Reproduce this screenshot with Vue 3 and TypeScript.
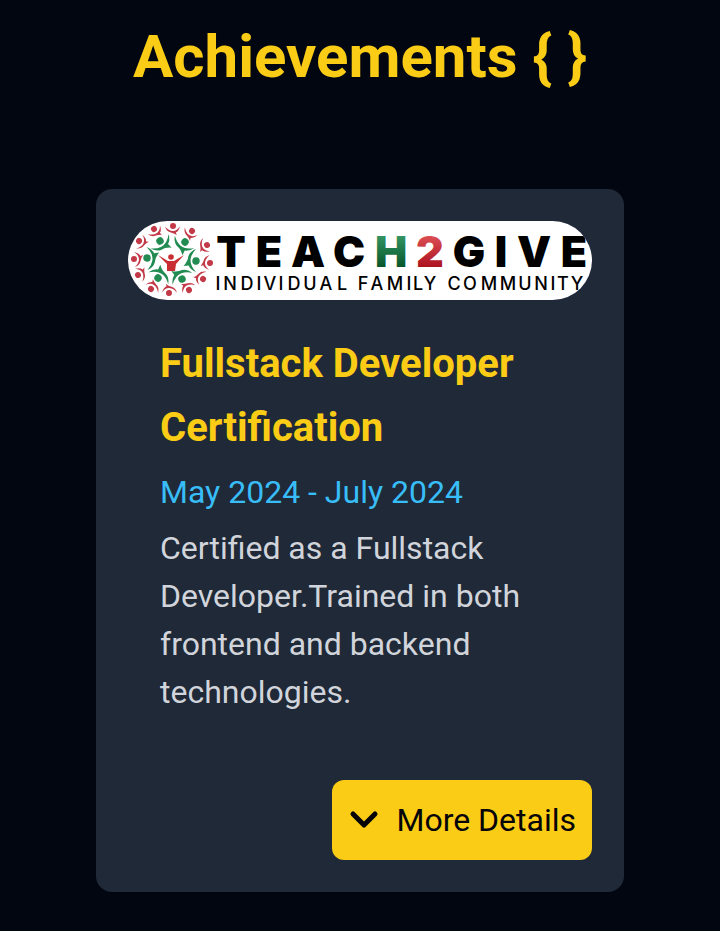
<script setup lang="ts">
import { ref } from 'vue'

interface Figure {
  x: number
  y: number
  angle: number
}

const achievement = {
  title: 'Fullstack Developer Certification',
  period: 'May 2024 - July 2024',
  summary:
    'Certified as a Fullstack Developer.Trained in both frontend and backend technologies.',
}

const open = ref(false)

// Turns head positions into figures that face away from the emblem centre.
function facingOut(heads: [number, number][]): Figure[] {
  return heads.map(([x, y]) => ({
    x,
    y,
    angle: (Math.atan2(x - 44, 38 - y) * 180) / Math.PI,
  }))
}

const outer = facingOut([
  [45, 5], [64, 10], [79, 24], [82, 42], [75, 58], [61, 69],
  [41, 72], [23, 68], [10, 54], [6, 38], [11, 20], [26, 8],
])
const inner = facingOut([
  [32, 20], [57, 21], [68, 40], [54, 58], [30, 57], [19, 37],
])
</script>

<template>
  <main class="page">
    <h1 class="heading">Achievements { }</h1>

    <article class="card">
      <svg class="logo" viewBox="0 0 464 79" role="img" aria-label="Teach2Give">
        <defs>
          <linearGradient id="green" x1="0" y1="0" x2="0" y2="1">
            <stop offset="0.2" stop-color="#339563" />
            <stop offset="0.8" stop-color="#07572b" />
          </linearGradient>
          <linearGradient id="red" x1="0" y1="0" x2="0" y2="1">
            <stop offset="0.2" stop-color="#dc4f55" />
            <stop offset="0.8" stop-color="#ad1420" />
          </linearGradient>
        </defs>
        <rect width="464" height="79" fill="#fff" />
        <g
          v-for="(p, i) in outer"
          :key="'o' + i"
          :transform="`translate(${p.x} ${p.y}) rotate(${p.angle})`"
          fill="#c23a48"
        >
          <circle r="3" />
          <path d="M-8 1Q-4 5 0 5Q4 5 7 0Q6 5 3 6.500L4 9Q1 7 -2 6.500Q-6 6 -8 1Z" />
        </g>
        <g
          v-for="(p, i) in inner"
          :key="'i' + i"
          :transform="`translate(${p.x} ${p.y}) rotate(${p.angle})`"
          fill="#218b52"
        >
          <circle r="3.7" />
          <path d="M-12 1Q-7 5 -2 5.500Q5 6 11 -1Q9 5 5 7L6 12Q1 8 -4 8Q-9 7 -12 1Z" />
        </g>
        <g fill="#c72d32">
          <circle cx="43" cy="36" r="2.8" />
          <path d="M30 34L40 40H46L56 34L48 43L47 50H39V43Z" />
        </g>
        <g class="wordmark">
          <text x="103 141 180 221" y="46">TEAC</text>
          <text x="263" y="46" fill="url(#green)">H</text>
          <text x="302" y="46" fill="url(#red)">2</text>
          <text x="341 373 406 446" y="46">GIVE</text>
        </g>
        <g class="tagline">
          <text x="90 102 119 131 142 153 166 182 198 214" y="69">INDIVIDUAL</text>
          <text x="235 249 267 281 290 302" y="69">FAMILY</text>
          <text x="326 342 361 380 397 413 425 435 449" y="69">COMMUNITY</text>
        </g>
      </svg>

      <div class="body">
        <h2 class="title">{{ achievement.title }}</h2>
        <p class="period">{{ achievement.period }}</p>
        <p class="summary">{{ achievement.summary }}</p>
      </div>

      <div class="actions">
        <button class="more" type="button" :aria-expanded="open" @click="open = !open">
          <svg class="chevron" viewBox="0 0 32 32" aria-hidden="true">
            <path d="M5 10L16 21L27 10" />
          </svg>
          <span>More Details</span>
        </button>
      </div>
    </article>
  </main>
</template>

<style>
body {
  margin: 0;
  background: #020611;
}
</style>

<style scoped>
.page {
  min-height: 100vh;
  box-sizing: border-box;
  padding: 17px 96px 39px;
  background: #020611;
  font-family: Roboto, sans-serif;
}

.heading {
  margin: 0 0 92px;
  color: #facc15;
  font-size: 60px;
  font-weight: 700;
  line-height: 80px;
  text-align: center;
}

.card {
  padding: 32px;
  border-radius: 16px;
  background: #1f2937;
}

.logo {
  display: block;
  width: 100%;
  border-radius: 40px;
}

.wordmark {
  font-family: Inter, sans-serif;
  font-size: 43px;
  font-weight: 900;
  text-anchor: middle;
}

.tagline {
  font-family: Inter, sans-serif;
  font-size: 18px;
  font-weight: 500;
  text-anchor: middle;
}

.body {
  padding: 32px;
}

.title {
  margin: 0;
  color: #facc15;
  font-size: 40px;
  font-weight: 700;
  line-height: 64px;
}

.period {
  margin: 8px 0;
  color: #38bdf8;
  font-size: 32px;
  line-height: 48px;
}

.summary {
  margin: 0;
  color: #d1d5db;
  font-size: 32px;
  line-height: 48px;
}

.actions {
  display: flex;
  justify-content: flex-end;
  padding-top: 32px;
}

.more {
  display: flex;
  align-items: center;
  gap: 16px;
  padding: 16px;
  border: 0;
  border-radius: 12px;
  background: #facc15;
  color: #050509;
  font-family: inherit;
  font-size: 32px;
  line-height: 48px;
  cursor: pointer;
}

.chevron {
  width: 32px;
  height: 32px;
  fill: none;
  stroke: currentColor;
  stroke-width: 5;
  stroke-linecap: round;
  stroke-linejoin: round;
}
</style>
